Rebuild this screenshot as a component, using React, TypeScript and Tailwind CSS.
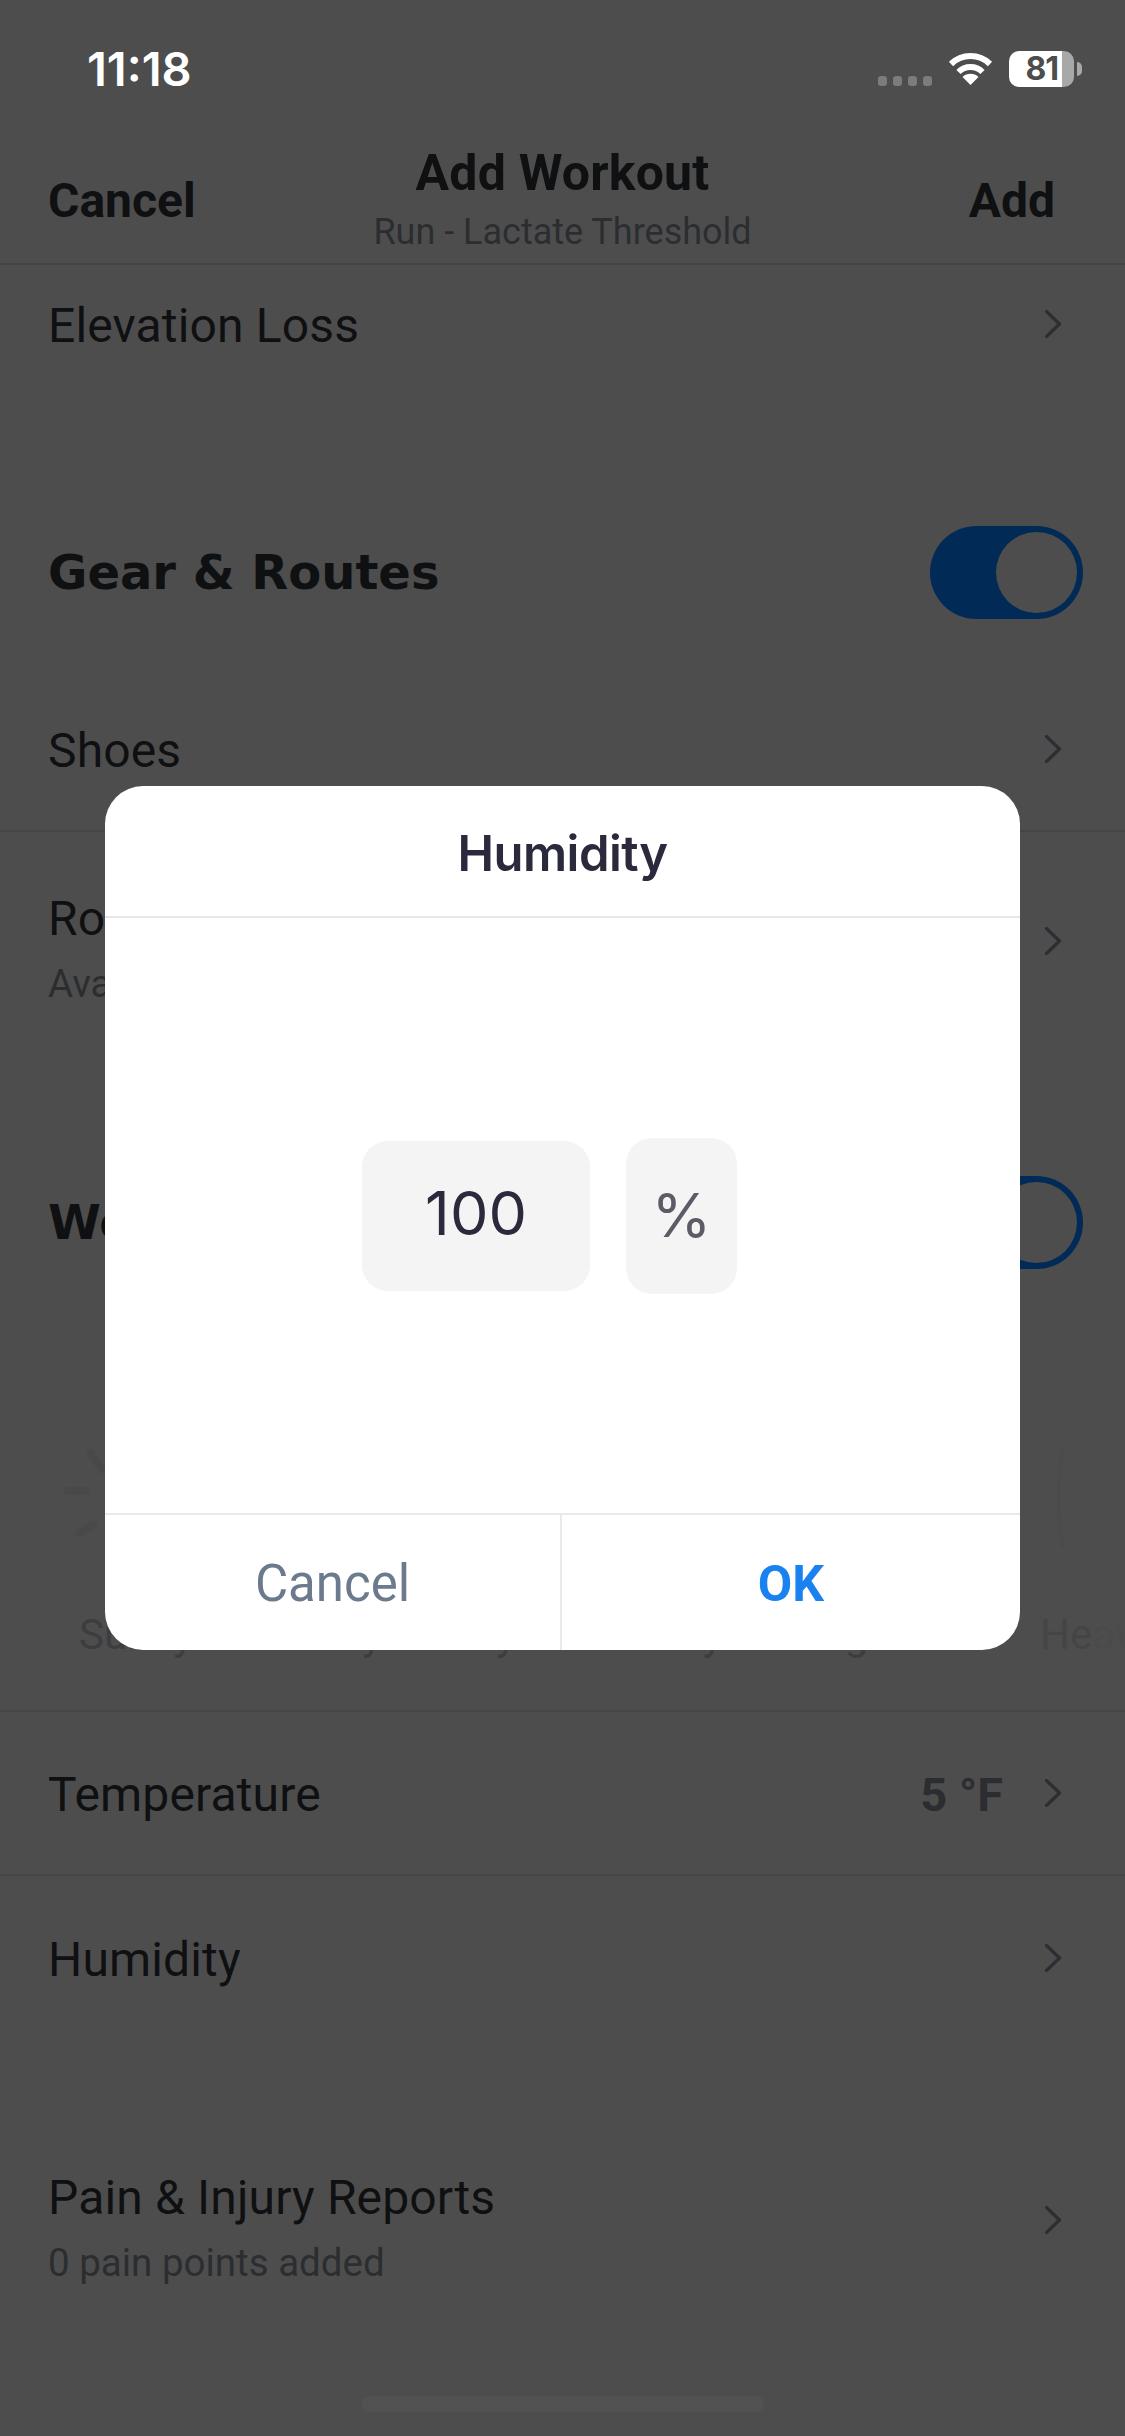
const roboto = '[font-family:Roboto,sans-serif]'

function Chevron() {
  return (
    <svg width="18" height="28" viewBox="0 0 18 28" fill="none" className="-mt-[4px] shrink-0">
      <path d="M2.5 1.5 L15.5 14 L2.5 26.5" stroke="#2c2e33" strokeWidth="3.2" strokeLinecap="round" strokeLinejoin="round" />
    </svg>
  )
}

function Wifi() {
  return (
    <svg width="45" height="34" viewBox="0 0 45 34" fill="none">
      <path d="M3 13 A 28 28 0 0 1 42 13" stroke="white" strokeWidth="6" />
      <path d="M10.5 21 A 17 17 0 0 1 34.5 21" stroke="white" strokeWidth="6" />
      <path d="M22.5 34 L14.5 26 A 11.5 11.5 0 0 1 30.5 26 Z" fill="white" />
    </svg>
  )
}

function StatusBar() {
  return (
    <div className="flex h-[100px] items-start justify-between pl-[87px] pr-[43px] pt-[51px]">
      <span className="text-[47px] leading-[36px] font-semibold text-white [font-family:Inter,sans-serif]">11:18</span>
      <div className="flex h-[36px] items-end gap-4">
        <div className="mb-[1px] flex gap-[6px]">
          <span className="h-[10px] w-[9px] rounded-[3px] bg-[#7c7c7c]" />
          <span className="h-[10px] w-[9px] rounded-[3px] bg-[#7c7c7c]" />
          <span className="h-[10px] w-[9px] rounded-[3px] bg-[#7c7c7c]" />
          <span className="h-[10px] w-[9px] rounded-[3px] bg-[#7c7c7c]" />
        </div>
        <div className="mb-[2px]"><Wifi /></div>
        <div className="flex items-center gap-[3px]">
          <div className="flex h-[36px] w-[65px]">
            <div className="flex w-[53px] items-center justify-end rounded-l-[10px] bg-white pr-[4px] text-[32px] leading-[36px] font-bold tracking-[-1px] text-[#4d4d4d] [font-family:Inter,sans-serif]">81</div>
            <div className="flex-1 rounded-r-[10px] bg-[#a8a8a8]" />
          </div>
          <div className="h-[14px] w-[5px] rounded-r-full bg-[#a8a8a8]" />
        </div>
      </div>
    </div>
  )
}

function NavBar() {
  return (
    <div className="grid h-[165px] grid-cols-[1fr_auto_1fr] border-b-2 border-[#454545] px-[48px]">
      <span className="mt-[73px] text-[48px] leading-[56px] font-bold text-[#0f1012]">Cancel</span>
      <div className="flex flex-col items-center pt-[45px]">
        <span className="text-[50px] leading-[56px] font-bold tracking-[0.2px] text-[#0f1012]">Add Workout</span>
        <span className="mt-[9px] text-[36px] leading-[44px] text-[#2b2d31]">Run - Lactate Threshold</span>
      </div>
      <span className="mr-[22px] mt-[73px] text-right text-[48px] leading-[56px] font-bold text-[#0f1012]">Add</span>
    </div>
  )
}

function Toggle() {
  return (
    <div className="flex h-[93px] w-[153px] items-center justify-end rounded-full bg-[#022a56] pr-[6px]">
      <div className="h-[81px] w-[81px] rounded-full bg-[#4d4d4d]" />
    </div>
  )
}

function SectionHead({ title, height }: { title: string; height: string }) {
  return (
    <div className={`flex items-center justify-between pl-[48px] pr-[42px] ${height}`}>
      <span className="text-[48px] leading-[56px] font-bold text-[#0f1012] [font-family:'DejaVu_Sans',sans-serif]">{title}</span>
      <Toggle />
    </div>
  )
}

function Row({ label, sub, value, height, border }: { label: string; sub?: string; value?: string; height: string; border?: boolean }) {
  return (
    <div className={`flex items-center justify-between pl-[48px] pr-[63px] ${height} ${border ? 'border-b-2 border-[#454545]' : ''}`}>
      <div className={`flex flex-col ${sub ? 'mt-[10px]' : ''}`}>
        <span className="text-[48px] leading-[56px] tracking-[0.15px] text-[#0f1012]">{label}</span>
        {sub && <span className="mt-[15px] text-[38.5px] leading-[44px] text-[#2b2d31]">{sub}</span>}
      </div>
      <div className="flex items-center gap-[41px]">
        {value && <span className="text-[47px] leading-[56px] font-bold text-[#2b2d31]">{value}</span>}
        <Chevron />
      </div>
    </div>
  )
}

function WeatherStrip() {
  return (
    <div className="h-[322px] border-b-2 border-[#464646]">
      <div className="flex h-[220px] items-center justify-between pl-[60px] pr-[30px] pb-[4px]">
        {/* only the edge of these icons shows beside the dialog */}
        <svg width="60" height="110" viewBox="0 0 60 110" fill="none" stroke="#494949" strokeWidth="8" strokeLinecap="round">
          <path d="M31 10 L42 26" />
          <path d="M8 48 L26 48" />
          <path d="M20 90 L33 82" />
        </svg>
        <svg width="40" height="120" viewBox="0 0 40 120" fill="none" stroke="#4b4b4b" strokeWidth="3">
          <path d="M8 10 C 2 40 2 80 8 110" />
        </svg>
      </div>
      <div className="flex whitespace-nowrap pl-[79px] text-[42px] leading-[50px] text-[#3c3d40]">
        <span className="w-[175px] shrink-0">Sunny</span>
        <span className="w-[160px] shrink-0">Cloudy</span>
        <span className="w-[185px] shrink-0">Rainy</span>
        <span className="w-[160px] shrink-0">Snowy</span>
        <span className="w-[281px] shrink-0">Smog</span>
        <span className="shrink-0 text-[#454545]">He<span className="text-[#4b4b4b]">avy</span></span>
      </div>
    </div>
  )
}

function HumidityDialog() {
  return (
    <div className="absolute left-[105px] top-[786px] flex h-[864px] w-[915px] flex-col overflow-hidden rounded-[38px] bg-white">
      <div className="flex h-[132px] items-center justify-center border-b-2 border-[#e6e6ec] pt-[6px] text-[49px] font-semibold tracking-[-0.5px] text-[#2a2a3c] [font-family:Inter,sans-serif]">
        Humidity
      </div>
      <div className="flex flex-1 items-center justify-center gap-[36px] pr-[26px] [font-family:Inter,sans-serif]">
        <div className="flex h-[150px] w-[228px] items-center justify-center rounded-[26px] bg-[#f4f4f5] pb-[4px] text-[61px] text-[#2a2a3c]">100</div>
        <div className="flex h-[156px] w-[111px] items-center justify-center rounded-[26px] bg-[#f4f4f5] text-[61px] text-[#5c5c66]">%</div>
      </div>
      <div className="flex h-[137px] border-t-2 border-[#e6e9ee]">
        <div className="flex w-[457px] items-center justify-center border-r-2 border-[#e8e9ee] pt-[4px] text-[51px] text-[#6b7a8d]">Cancel</div>
        <div className="flex flex-1 items-center justify-center pt-[4px] text-[50px] font-bold text-[#1a82f0]">OK</div>
      </div>
    </div>
  )
}

export default function App() {
  return (
    <div className={`relative h-[2436px] w-[1125px] overflow-hidden bg-[#4d4d4d] ${roboto}`}>
      <StatusBar />
      <NavBar />
      <Row label="Elevation Loss" height="h-[122px]" />
      <SectionHead title="Gear & Routes" height="h-[284px] pt-[86px]" />
      <Row label="Shoes" height="h-[161px]" border />
      <Row label="Routes" sub="Available routes" height="h-[222px]" />
      <SectionHead title="Weather" height="h-[336px]" />
      <WeatherStrip />
      <Row label="Temperature" value="5 °F" height="h-[164px] pt-[4px]" border />
      <Row label="Humidity" height="h-[168px]" />
      <Row label="Pain & Injury Reports" sub="0 pain points added" height="h-[356px]" />
      <div className="absolute bottom-[24px] left-[362px] h-[16px] w-[402px] rounded-full bg-[#525252]" />
      <HumidityDialog />
    </div>
  )
}
